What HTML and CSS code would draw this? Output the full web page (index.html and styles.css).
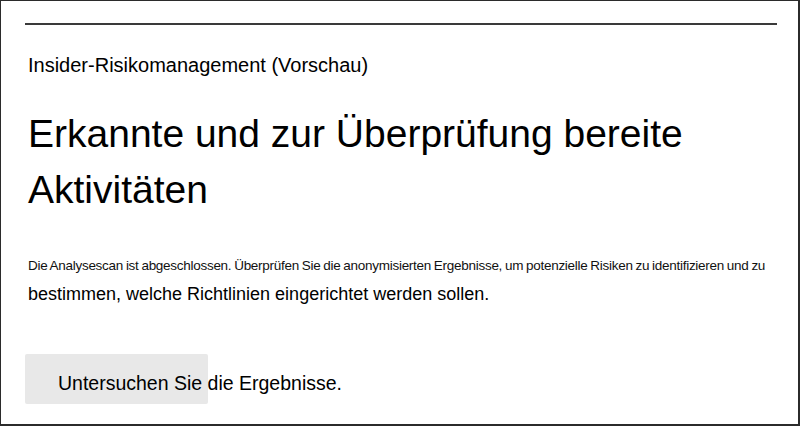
FILE: index.html
```html
<!DOCTYPE html>
<html lang="de">
<head>
<meta charset="utf-8">
<link rel="stylesheet" href="styles.css">
</head>
<body>
<div class="frame">
  <div class="rule"></div>
  <p class="eyebrow">Insider-Risikomanagement (Vorschau)</p>
  <h1 class="title">Erkannte und zur Überprüfung bereite<br>Aktivitäten</h1>
  <div class="desc">
    <div class="small">Die Analysescan ist abgeschlossen. Überprüfen Sie die anonymisierten Ergebnisse, um potenzielle Risiken zu identifizieren und zu</div>
    <div class="large">bestimmen, welche Richtlinien eingerichtet werden sollen.</div>
  </div>
  <div class="actions">
    <button class="btn" type="button">Untersuchen Sie die Ergebnisse.</button>
  </div>
</div>
</body>
</html>
```
FILE: styles.css
```css
html, body {
  margin: 0;
  padding: 0;
  background: #ffffff;
}
.frame {
  box-sizing: border-box;
  width: 800px;
  height: 426px;
  border-style: solid;
  border-color: #2b2b2b;
  border-width: 1px 2px 2px 1px;
  padding: 22px 21px 0 24px;
  font-family: "Liberation Sans", Arial, sans-serif;
  color: #000;
  display: flex;
  flex-direction: column;
}
.rule {
  height: 2px;
  background: #3a3a3a;
}
.eyebrow {
  margin: 28px 0 0 3px;
  font-size: 20px;
  line-height: 24px;
}
.title {
  margin: 29px 0 0 3px;
  font-size: 39px;
  font-weight: normal;
  line-height: 56px;
}
.desc {
  margin: 35px 0 0 3px;
}
.small {
  font-size: 13.5px;
  line-height: 26px;
  letter-spacing: -0.28px;
  word-spacing: -0.6px;
  white-space: nowrap;
  color: #111;
}
.large {
  font-size: 18px;
  line-height: 30px;
}
.actions {
  margin-top: 45px;
}
.btn {
  box-sizing: border-box;
  display: block;
  width: 183px;
  padding: 17px 0 9px 33px;
  margin: 0;
  border: none;
  border-radius: 2px;
  background: #e8e8e8;
  font-family: "Liberation Sans", Arial, sans-serif;
  font-size: 19.5px;
  line-height: 24px;
  color: #000;
  text-align: left;
  white-space: nowrap;
  overflow: visible;
}
```
